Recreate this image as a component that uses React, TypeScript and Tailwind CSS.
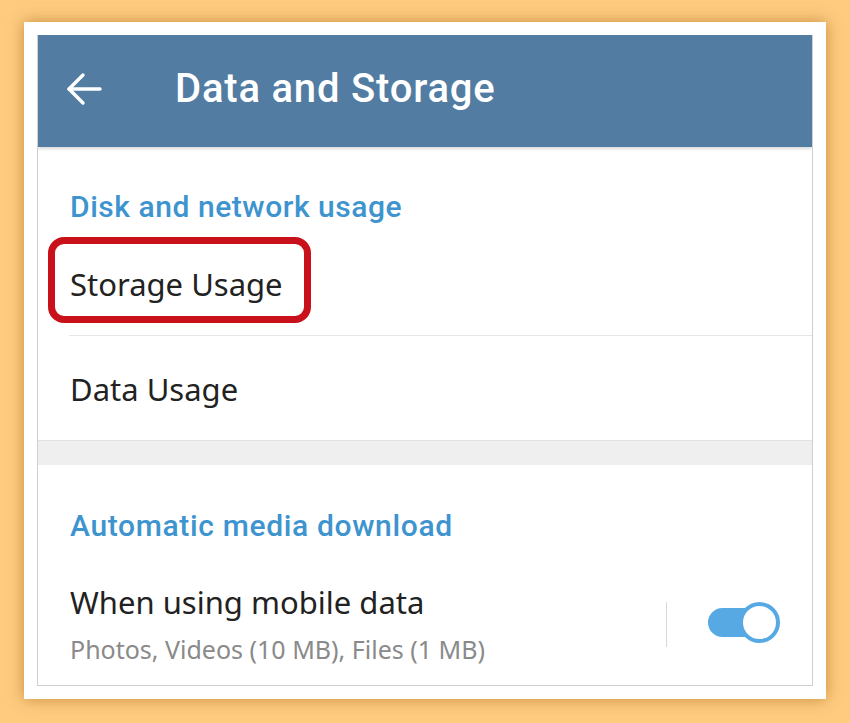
export default function App() {
  return (
    <div className="w-[850px] h-[723px] bg-[#fecb7f] pl-[24px] pt-[22px]">
      <div className="w-[802px] h-[677px] bg-white p-[13px] shadow-[0_0_14px_rgba(140,80,0,0.5)]">
        <div className="h-full flex flex-col border-x border-b border-[#cfcfcf] bg-white overflow-hidden">
          {/* Toolbar */}
          <div className="h-[112px] shrink-0 bg-[#527ca2] flex items-center pb-[4px] shadow-[0_2px_3px_rgba(0,0,0,0.15)] relative z-10">
            <svg width="36" height="36" viewBox="0 0 36 36" className="ml-[28px]" fill="none" stroke="white" strokeWidth="3.4" strokeLinecap="round" strokeLinejoin="round">
              <path d="M34 18 H3" />
              <path d="M17 4 L3 18 L17 32" />
            </svg>
            <h1 className="ml-[73px] text-white text-[40px] font-medium font-['Roboto',sans-serif] tracking-[0.8px]">
              Data and Storage
            </h1>
          </div>

          {/* Disk and network usage */}
          <div className="pl-[32px] pt-[40px] pb-[5px]">
            <div className="text-[#3d94cf] text-[30px] leading-[40px] font-medium font-['Roboto',sans-serif] tracking-[0.55px]">
              Disk and network usage
            </div>
          </div>
          <div className="relative h-[104px] flex items-center pl-[32px]">
            <span className="text-[#222] text-[31px] font-['Noto_Sans',sans-serif]">Storage Usage</span>
            <div className="absolute left-[10px] top-[5px] w-[263px] h-[86px] border-[7px] border-[#c8111a] rounded-[16px]" />
            <div className="absolute left-[31px] right-0 bottom-0 h-px bg-[#e6e6e6]" />
          </div>
          <div className="h-[104px] flex items-center pl-[32px] pt-[2px]">
            <span className="text-[#222] text-[31px] font-['Noto_Sans',sans-serif]">Data Usage</span>
          </div>
          <div className="h-[25px] shrink-0 bg-[#efefef] border-t border-[#e2e2e2]" />

          {/* Automatic media download */}
          <div className="pl-[32px] pt-[41px]">
            <div className="text-[#3d94cf] text-[30px] leading-[40px] font-medium font-['Roboto',sans-serif] tracking-[0.65px]">
              Automatic media download
            </div>
          </div>
          <div className="flex items-start pl-[32px] pt-[36px]">
            <div className="flex-1">
              <div className="text-[#222] text-[31px] leading-[40px] font-['Noto_Sans',sans-serif]">When using mobile data</div>
              <div className="mt-[10px] text-[#8a8a8a] text-[25px] leading-[34px] font-['Noto_Sans',sans-serif]">
                Photos, Videos (10 MB), Files (1 MB)
              </div>
            </div>
            <div className="w-px h-[45px] bg-[#d9d9d9] mt-[20px] mr-[41px]" />
            <div className="relative w-[72px] h-[41px] mt-[20px] mr-[32px]">
              <div className="absolute left-0 top-[6px] w-[60px] h-[29px] rounded-full bg-[#56a9e2]" />
              <div className="absolute right-0 top-0 w-[41px] h-[41px] rounded-full bg-white border-[4px] border-[#56a9e2]" />
            </div>
          </div>
        </div>
      </div>
    </div>
  );
}
